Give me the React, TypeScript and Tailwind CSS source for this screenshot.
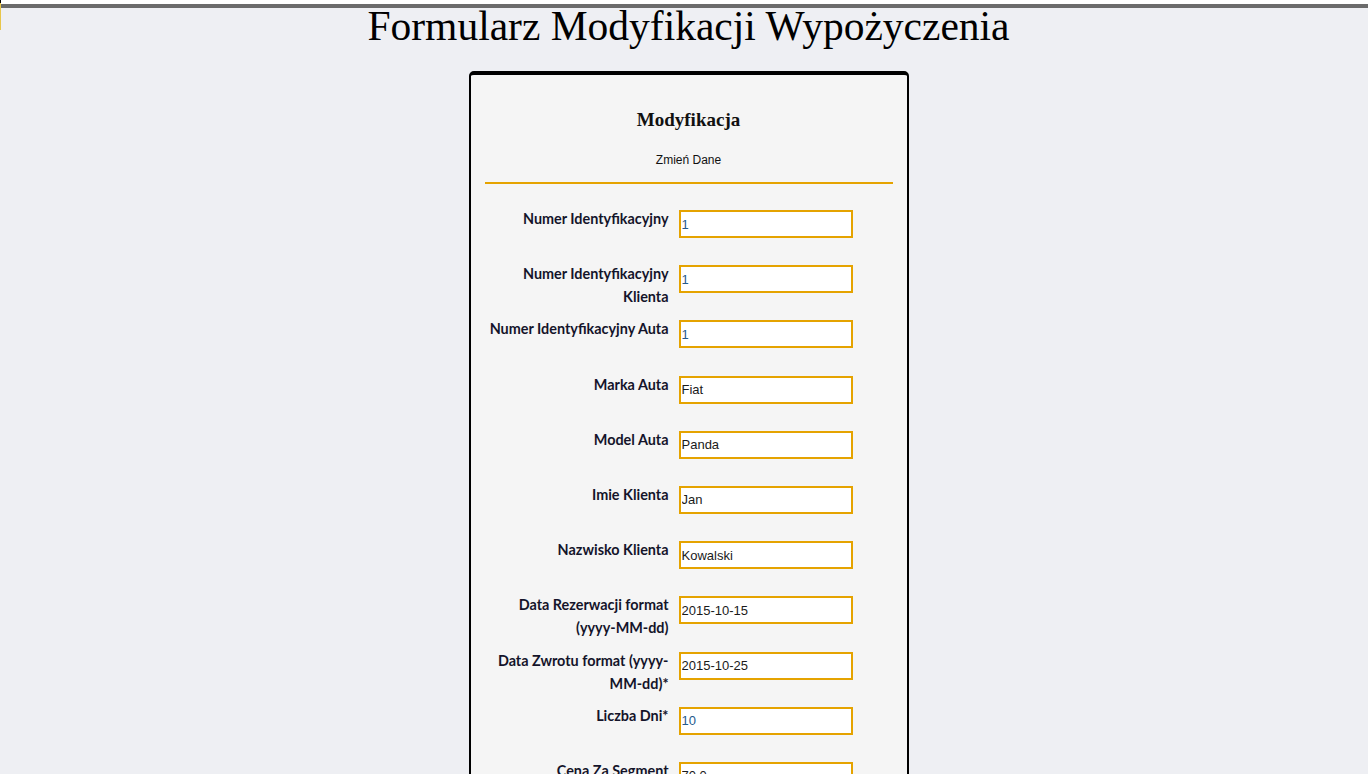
import React from "react";

type Row = { label: string[]; value: string; num?: boolean };

const rows: Row[] = [
  { label: ["Numer Identyfikacyjny"], value: "1", num: true },
  { label: ["Numer Identyfikacyjny", "Klienta"], value: "1", num: true },
  { label: ["Numer Identyfikacyjny Auta"], value: "1", num: true },
  { label: ["Marka Auta"], value: "Fiat" },
  { label: ["Model Auta"], value: "Panda" },
  { label: ["Imie Klienta"], value: "Jan" },
  { label: ["Nazwisko Klienta"], value: "Kowalski" },
  { label: ["Data Rezerwacji format", "(yyyy-MM-dd)"], value: "2015-10-15" },
  { label: ["Data Zwrotu format (yyyy-", "MM-dd)*"], value: "2015-10-25" },
  { label: ["Liczba Dni*"], value: "10", num: true },
  { label: ["Cena Za Segment", "Auta"], value: "70.0" },
  { label: ["Cena Całkowita"], value: "700.0" },
];

export default function App() {
  return (
    <div className="relative min-h-screen bg-[#eeeff3] flex flex-col">
      <div className="absolute left-0 top-0 w-px h-[3px] bg-black" />
      <div className="absolute left-0 top-[3px] w-px h-[27px] bg-[#e8c64a]" />
      <div className="h-[4px] bg-white" />
      <div className="h-[4px] bg-[#6b6b6b]" />
      <div className="flex flex-col items-center pl-[9px] pb-10">
        <h1
          className="m-0 text-[41.5px] leading-[36px] font-normal text-black whitespace-nowrap"
          style={{ fontFamily: '"Liberation Serif", "Times New Roman", serif' }}
        >
          Formularz Modyfikacji Wypożyczenia
        </h1>
        <div className="mt-[27px] w-[440px] bg-[#f5f5f5] border-x-2 border-t-4 border-b-2 border-black rounded-[5px] pb-8">
          <h2
            className="mt-[33px] text-center text-[19px] leading-[24px] font-bold text-[#111]"
            style={{ fontFamily: '"Liberation Serif", "Times New Roman", serif' }}
          >
            Modyfikacja
          </h2>
          <p
            className="mt-[20px] text-center text-[12px] leading-[16px] text-[#111]"
            style={{ fontFamily: '"Liberation Sans", Arial, sans-serif' }}
          >
            Zmień Dane
          </p>
          <div className="mt-[14px] mx-[14px] h-[2px] bg-[#e5a300]" />
          <div className="mt-[23px] flex flex-col">
            {rows.map((r, i) => (
              <div key={i} className="flex items-start h-[55.2px] pl-[14px]">
                <div
                  className="w-[184px] text-right text-[14.4px] leading-[23px] font-bold text-[#14142a]"
                  style={{ fontFamily: 'Lato, "Open Sans", sans-serif' }}
                >
                  {r.label.map((l, j) => (
                    <div key={j} className="whitespace-nowrap">
                      {l}
                    </div>
                  ))}
                </div>
                <input
                  readOnly
                  defaultValue={r.value}
                  className={
                    "ml-[10px] mt-[3px] w-[174px] h-[28px] border-2 border-[#e5a300] bg-white px-[1px] text-[13px] outline-none " +
                    (r.num ? "text-[#245a8c]" : "text-[#1a1a1a]")
                  }
                  style={{ fontFamily: '"Liberation Sans", Arial, sans-serif' }}
                />
              </div>
            ))}
          </div>
        </div>
      </div>
    </div>
  );
}
